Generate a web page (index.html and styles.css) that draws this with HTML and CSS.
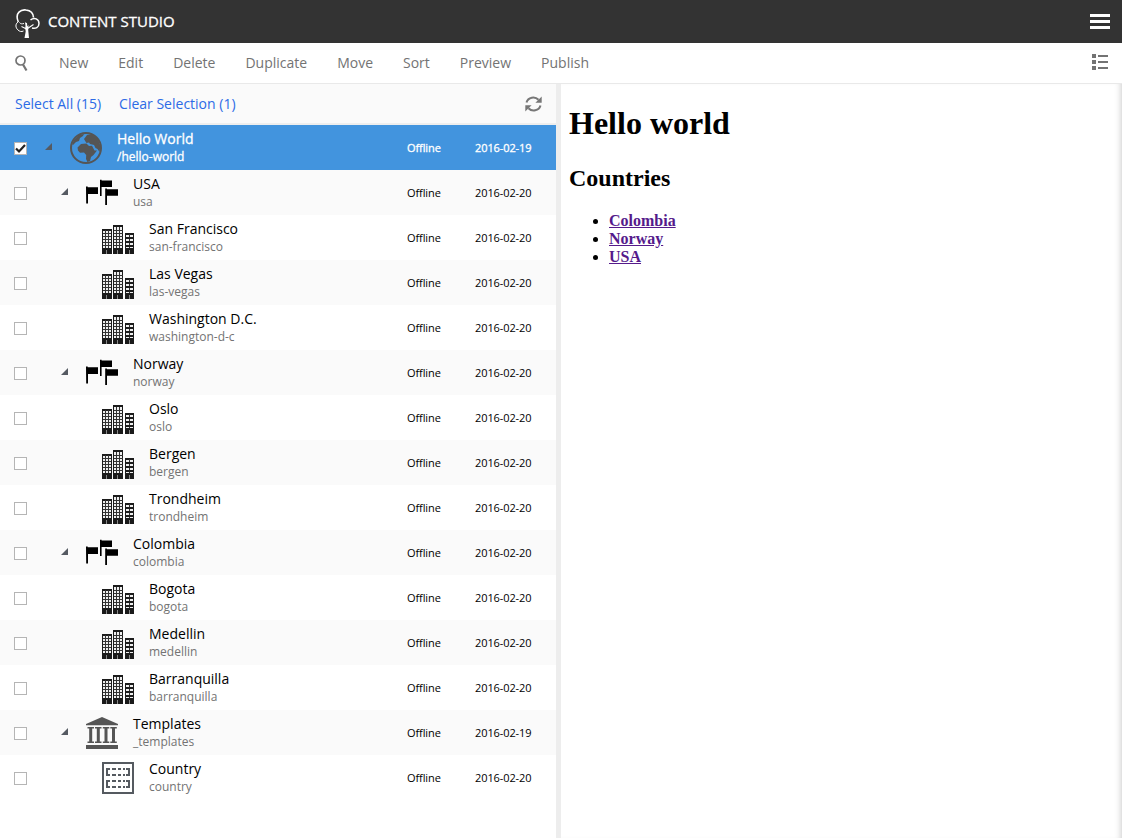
FILE: index.html
```
<!DOCTYPE html>
<html lang="en">
<head>
<meta charset="utf-8">
<title>Content Studio</title>
<link rel="stylesheet" href="styles.css">
</head>
<body>
<svg class="sprite" width="0" height="0">
  <defs>
    <symbol id="city" viewBox="0 0 32 32">
      <path fill="#1b1b1b" d="M0 7h10v25H0zM11 3h10v29H11zM23 11h9v21h-9z"/>
      <path fill="#eee" d="M1 9h8v17H1zM12 5h8v21h-8zM24 13h7v13h-7z"/>
      <path stroke="#333" stroke-width="1" d="M3.500 8v18M6.500 8v18M1 11.500h8M1 14.500h8M1 17.500h8M1 20.500h8M1 23.500h8M14.500 5v21M17.500 5v21M12 8.500h9M12 11.500h9M12 14.500h9M12 17.500h9M12 20.500h9M12 23.500h9M27.500 12v14"/>
      <path stroke="#1b1b1b" stroke-width="2" d="M23 16h9M23 20h9M23 24h9"/>
      <path stroke="#888" d="M4.500 28v4M15.500 28v4M27.500 28v4"/>
    </symbol>
    <symbol id="flags" viewBox="0 0 32 32">
      <path d="M0 9.500h1.700v.7H12V17H2v9.500H.2zM14 2.700h1.600v.7H26v6.600H15.600V19H14zM19.200 11.500h1.700v.7H32v6.600H21V28h-1.800z"/>
    </symbol>
    <symbol id="globe" viewBox="0 0 32 32">
      <circle cx="16" cy="16" r="15" fill="none" stroke="#555" stroke-width="2"/>
      <path fill="#555" d="M4 8 9 3l5-1-1 2-3 2-1 3-3 1-3 3-1-1zM15.500 9.500 14 7l3-4 5-1 6 5 2.500 7-1 6-2-3-2-1-1.500-3-4-1-1-1.500-2.500.500zM7.500 15.500l3.500-3.500 5.500-.5 2.500 2.500 3-.2 2.500 4.700h2.500L23.500 23 21 25l-1 4-2.500 1-1.500-3 .2-4-2.200-2.500-4 .2-2-2.200z"/>
    </symbol>
    <symbol id="temple" viewBox="0 0 32 32">
      <path fill="#555" d="M16 0 32 7v1.300H0V7zM0 28h32v4H0z"/>
      <path fill="none" stroke="#555" stroke-width="1.500" d="M1.500 10.800H8M9 10.800h6.500M16.800 10.800h6.500M24.300 10.800h6.500M1.500 25.200H8M9 25.200h6.500M16.800 25.200h6.500M24.300 25.200h6.500"/>
      <path stroke="#555" stroke-width="3" d="M4.700 10v16M12.300 10v16M20 10v16M27.500 10v16"/>
    </symbol>
    <symbol id="template" viewBox="0 0 32 32">
      <rect x="1" y="1" width="30" height="30" fill="#fff" stroke="#555a60" stroke-width="2"/>
      <path fill="none" stroke="#555a60" stroke-width="2" d="M8 7H5v6h3M24 7h3v6h-3M8 19H5v6h3M24 19h3v6h-3M10 7h4M16 7h3M21 7h2M10 13h4M16 13h3M21 13h2M10 19h4M16 19h3M21 19h2M10 25h4M16 25h3M21 25h2"/>
    </symbol>
  </defs>
</svg>

<header class="appbar">
  <svg class="logo" viewBox="0 0 25 29" fill="none" stroke="#fff">
    <path stroke-width="1.600" d="M3.300 13C-.7 3.500 6.500.3 11 1c4.500.5 7.300 3.500 7.500 7.500"/>
    <path stroke-width="1.500" d="M15.500 11c4-3.500 8.500-.5 8.500 3.500 0 4-3.500 5.500-7 4.500"/>
    <path stroke-width="1" d="M3 13c-3 2-2.500 6 0 8 1.500 1.500 3.500 2 5.500 1M4.500 13.500c1 1.500 2.500 1.500 4.500 1"/>
    <path stroke-width="1.100" d="M11.500 20 6.500 17.500M12.500 19.500l6-4M11.500 17 10.500 13.500"/>
    <path fill="#fff" stroke="none" d="M11 14h1l.3 3.500 1.200-1.500-.3 5 .8 8H9.500l1.200-6.500-.5-3.500z"/>
  </svg>
  <h1 class="app-title">CONTENT STUDIO</h1>
  <div class="burger"><i></i><i></i><i></i></div>
</header>

<nav class="toolbar">
  <svg class="search" viewBox="0 0 13 17" fill="none" stroke="#737373"><circle cx="5.500" cy="5.500" r="4.500" stroke-width="1.700"/><path stroke-width="2.200" d="m8 9.500 3.500 6"/></svg>
  <span>New</span><span>Edit</span><span>Delete</span><span>Duplicate</span><span>Move</span><span>Sort</span><span>Preview</span><span>Publish</span>
  <svg class="details" viewBox="0 0 16 16" fill="#737373"><path d="M0 0h4v4H0zM6 1h10v2H6zM0 6h4v4H0zM6 7h10v2H6zM0 12h4v4H0zM6 13h10v2H6z"/></svg>
</nav>

<div class="workspace">
  <section class="browser">
    <div class="selection">
      <a>Select All (15)</a><a>Clear Selection (1)</a>
      <svg class="refresh" viewBox="0 0 17 16"><path fill="none" stroke="#777" stroke-width="2" d="M1.500 6.500C3 1 10 0 13.500 3.800M15.500 9.500C14 15 7 16 3.500 12.200"/><path fill="#777" d="M16.700.5v6.300h-6.300zM.3 15.500V9.200h6.300z"/></svg>
    </div>
    <div class="grid">
      <div class="row selected"><span class="check"><svg viewBox="0 0 11 11"><path fill="none" stroke="#222" stroke-width="2.200" d="m1 5.500 3 3L10 2"/></svg></span><i class="arrow"></i><svg class="icon"><use href="#globe"/></svg><div class="label"><b>Hello World</b><small>/hello-world</small></div><span class="status">Offline</span><span class="date">2016-02-19</span></div>
      <div class="row l1"><span class="check"></span><i class="arrow"></i><svg class="icon"><use href="#flags"/></svg><div class="label"><b>USA</b><small>usa</small></div><span class="status">Offline</span><span class="date">2016-02-20</span></div>
      <div class="row l2"><span class="check"></span><svg class="icon"><use href="#city"/></svg><div class="label"><b>San Francisco</b><small>san-francisco</small></div><span class="status">Offline</span><span class="date">2016-02-20</span></div>
      <div class="row l2"><span class="check"></span><svg class="icon"><use href="#city"/></svg><div class="label"><b>Las Vegas</b><small>las-vegas</small></div><span class="status">Offline</span><span class="date">2016-02-20</span></div>
      <div class="row l2"><span class="check"></span><svg class="icon"><use href="#city"/></svg><div class="label"><b>Washington D.C.</b><small>washington-d-c</small></div><span class="status">Offline</span><span class="date">2016-02-20</span></div>
      <div class="row l1"><span class="check"></span><i class="arrow"></i><svg class="icon"><use href="#flags"/></svg><div class="label"><b>Norway</b><small>norway</small></div><span class="status">Offline</span><span class="date">2016-02-20</span></div>
      <div class="row l2"><span class="check"></span><svg class="icon"><use href="#city"/></svg><div class="label"><b>Oslo</b><small>oslo</small></div><span class="status">Offline</span><span class="date">2016-02-20</span></div>
      <div class="row l2"><span class="check"></span><svg class="icon"><use href="#city"/></svg><div class="label"><b>Bergen</b><small>bergen</small></div><span class="status">Offline</span><span class="date">2016-02-20</span></div>
      <div class="row l2"><span class="check"></span><svg class="icon"><use href="#city"/></svg><div class="label"><b>Trondheim</b><small>trondheim</small></div><span class="status">Offline</span><span class="date">2016-02-20</span></div>
      <div class="row l1"><span class="check"></span><i class="arrow"></i><svg class="icon"><use href="#flags"/></svg><div class="label"><b>Colombia</b><small>colombia</small></div><span class="status">Offline</span><span class="date">2016-02-20</span></div>
      <div class="row l2"><span class="check"></span><svg class="icon"><use href="#city"/></svg><div class="label"><b>Bogota</b><small>bogota</small></div><span class="status">Offline</span><span class="date">2016-02-20</span></div>
      <div class="row l2"><span class="check"></span><svg class="icon"><use href="#city"/></svg><div class="label"><b>Medellin</b><small>medellin</small></div><span class="status">Offline</span><span class="date">2016-02-20</span></div>
      <div class="row l2"><span class="check"></span><svg class="icon"><use href="#city"/></svg><div class="label"><b>Barranquilla</b><small>barranquilla</small></div><span class="status">Offline</span><span class="date">2016-02-20</span></div>
      <div class="row l1"><span class="check"></span><i class="arrow"></i><svg class="icon"><use href="#temple"/></svg><div class="label"><b>Templates</b><small>_templates</small></div><span class="status">Offline</span><span class="date">2016-02-19</span></div>
      <div class="row l2"><span class="check"></span><svg class="icon"><use href="#template"/></svg><div class="label"><b>Country</b><small>country</small></div><span class="status">Offline</span><span class="date">2016-02-20</span></div>
    </div>
  </section>
  <main class="preview">
    <h1>Hello world</h1>
    <h2>Countries</h2>
    <ul><li><a>Colombia</a></li><li><a>Norway</a></li><li><a>USA</a></li></ul>
  </main>
</div>
</body>
</html>
```
FILE: styles.css
```
* { box-sizing: border-box; }
body { margin: 0; height: 838px; overflow: hidden; display: flex; flex-direction: column; background: #fff; font: 14px/18px "Open Sans", sans-serif; }
.sprite { position: absolute; }
.appbar { flex: none; height: 43px; background: #333; display: flex; align-items: center; padding: 0 12px 0 15px; }
.logo { width: 25px; height: 29px; margin-top: 3px; }
.app-title { margin: 0 auto 2px 8px; color: #fff; font-size: 15px; font-weight: 400; line-height: 20px; -webkit-text-stroke: .3px #fff; }
.burger { width: 20px; display: grid; gap: 3px; }
.burger i { height: 3px; background: #fff; }
.toolbar { flex: none; height: 41px; border-bottom: 1px solid #e9e9e9; display: flex; align-items: center; gap: 30px; padding: 0 14px 0 15px; color: #737373; }
.search { width: 13px; height: 17px; margin-right: 1px; }
.details { width: 16px; height: 16px; margin-left: auto; margin-top: -2px; }
.workspace { flex: 1; display: flex; min-height: 0; }
.browser { width: 561px; border-right: 5px solid #ededed; }
.selection { height: 41px; background: #fafafa; border-bottom: 2px solid #eee; display: flex; align-items: center; gap: 18px; padding: 0 14px 0 15px; color: #2c6be6; }
.refresh { width: 17px; height: 16px; margin-left: auto; }
.row { height: 45px; display: flex; align-items: center; padding: 0 24px 0 14px; background: #fff; }
.row:nth-child(even) { background: #fafafa; }
.row.selected { background: #4294de; color: #fff; }
.check { width: 13px; height: 13px; border: 1px solid #b5b5b5; background: #fff; display: flex; margin-top: 2px; }
.check svg { width: 11px; height: 11px; }
.arrow { width: 7px; height: 7px; margin: -2px 0 0 18px; background: #555a62; clip-path: polygon(100% 0, 100% 100%, 0 100%); }
.l1 .arrow { margin-left: 34px; }
.icon { width: 32px; height: 32px; margin-left: 18px; flex: none; margin-top: 1px; }
.l2 .icon { margin-left: 75px; }
.label { margin-left: 15px; margin-right: auto; display: grid; }
.label b { font-weight: 400; }
.label small { font-size: 12px; line-height: 17px; color: #737373; }
.selected .label small { color: #fff; }
.selected .label, .selected .status, .selected .date { -webkit-text-stroke: .3px #fff; }
.status, .date { font-size: 11px; white-space: nowrap; letter-spacing: -.1px; }
.status { width: 68px; }
.date { width: 57px; }
.preview { flex: 1; padding: 0 8px; font: 16px/18px "Liberation Serif", serif; box-shadow: inset -6px 0 6px -5px #ccc; }
.preview h1 { font-size: 32px; line-height: 37px; margin: 21px 0 23px; }
.preview h2 { font-size: 24px; line-height: 27px; margin: 0 0 20px; }
.preview ul { margin: 0; padding-left: 40px; }
.preview a { color: #551a8b; font-weight: 700; text-decoration: underline; }
```
